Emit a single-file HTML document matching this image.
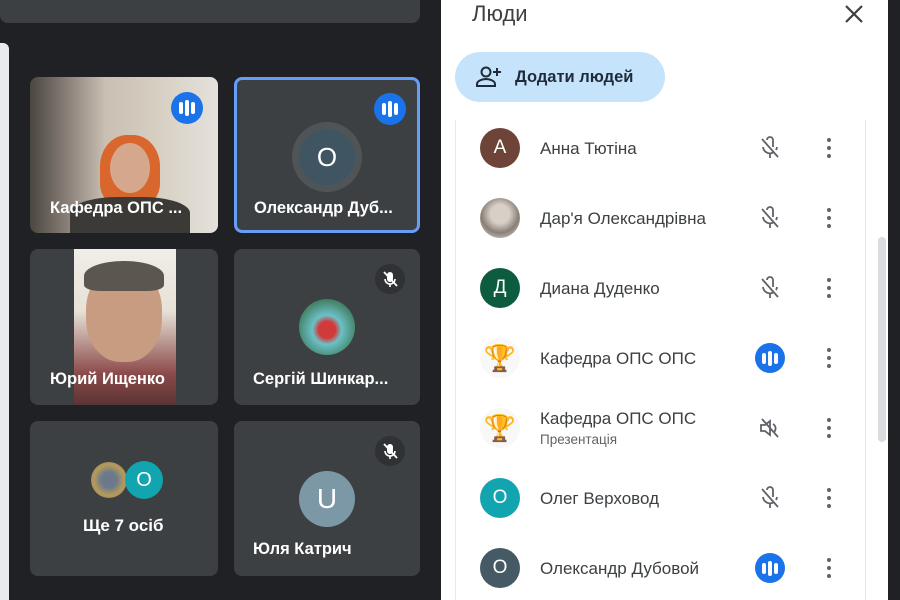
<!DOCTYPE html>
<html><head><meta charset="utf-8"><style>
*{margin:0;padding:0;box-sizing:border-box}
body{width:900px;height:600px;overflow:hidden;background:#202124;font-family:"Liberation Sans",sans-serif;position:relative}
.a{position:absolute}
.tile{position:absolute;background:#3c4043;border-radius:8px;overflow:hidden}
.nm{position:absolute;color:#fff;font-weight:bold;font-size:16.5px;white-space:nowrap}
.spk{position:absolute;width:32px;height:32px;border-radius:50%;background:#1a73e8;display:flex;align-items:center;justify-content:center;gap:2px}
.spk i{display:block;width:4px;background:#fff;border-radius:2px}
.mut{position:absolute;width:30px;height:30px;border-radius:50%;background:#2f3134}
.row{position:absolute;left:480px;width:370px;height:40px}
.av{position:absolute;left:0;top:0;width:40px;height:40px;border-radius:50%;color:#fff;font-size:19px;display:flex;align-items:center;justify-content:center}
.rn{position:absolute;left:60px;top:11px;font-size:17px;color:#3c4043;white-space:nowrap}
.dots{position:absolute;left:347px;top:10px;width:4px;height:20px}
.dots b{display:block;width:4px;height:4px;border-radius:50%;background:#5f6368;margin-bottom:4px}
.bspk{position:absolute;left:275px;top:5px;width:30px;height:30px;border-radius:50%;background:#1a73e8;display:flex;align-items:center;justify-content:center;gap:2px}
.bspk i{display:block;width:4px;height:14px;background:#fff;border-radius:2px}
.mic{position:absolute;left:278px;top:8px}
</style></head><body>
<div class="a" style="left:0;top:0;width:420px;height:23px;background:#3c4043;border-radius:0 0 8px 8px"></div>
<div class="a" style="left:0;top:43px;width:9px;height:557px;background:#e8eaed;border-radius:0 6px 0 0"></div>

<div class="tile" style="left:30px;top:77px;width:188px;height:156px;background:linear-gradient(90deg,#4a4640 0,#8a8078 20%,#c9bfb2 40%,#d8d0c4 70%,#e4e2dc 100%)">
 <div class="a" style="left:70px;top:58px;width:60px;height:70px;border-radius:45% 45% 30% 30%;background:#d9662c"></div>
 <div class="a" style="left:80px;top:66px;width:40px;height:50px;border-radius:50%;background:#d5a88e"></div>
 <div class="a" style="left:40px;top:120px;width:120px;height:40px;border-radius:40% 40% 0 0;background:#3b3a36"></div>
 <div class="nm" style="left:20px;top:122px">Кафедра ОПС ...</div>
 <div class="spk" style="left:141px;top:15px"><i style="height:12px"></i><i style="height:16px"></i><i style="height:12px"></i></div>
</div>
<div class="tile" style="left:234px;top:77px;width:186px;height:156px;border:3px solid #669df6;background:#3c4043">
 <div class="a" style="left:55px;top:42px;width:70px;height:70px;border-radius:50%;background:#4f5457;display:flex;align-items:center;justify-content:center"><div style="width:56px;height:56px;border-radius:50%;background:#3f5562;color:#fff;font-size:26px;display:flex;align-items:center;justify-content:center">O</div></div>
 <div class="nm" style="left:17px;top:119px">Олександр Дуб...</div>
 <div class="spk" style="left:137px;top:13px"><i style="height:12px"></i><i style="height:16px"></i><i style="height:12px"></i></div>
</div>
<div class="tile" style="left:30px;top:249px;width:188px;height:156px">
 <div class="a" style="left:44px;top:0;width:102px;height:156px;background:linear-gradient(180deg,#f0eee8 0,#e7e1d6 40%,#8b4a4a 80%,#5c3434 100%)"></div>
 <div class="a" style="left:56px;top:18px;width:76px;height:95px;border-radius:45%;background:#c89c80"></div>
 <div class="a" style="left:54px;top:12px;width:80px;height:30px;border-radius:50% 50% 20% 20%;background:#5c5650"></div>
 <div class="nm" style="left:20px;top:121px">Юрий Ищенко</div>
</div>
<div class="tile" style="left:234px;top:249px;width:186px;height:156px">
 <div class="a" style="left:65px;top:50px;width:56px;height:56px;border-radius:50%;background:radial-gradient(circle at 50% 55%,#d03a3a 0 20%,#6cc0c8 35%,#3f7c5a 75%)"></div>
 <div class="nm" style="left:19px;top:121px">Сергій Шинкар...</div>
 <div class="mut" style="left:141px;top:15px"><svg width="30" height="30" viewBox="0 0 30 30"><rect x="12" y="8" width="6" height="10" rx="3" fill="#fff"/><path d="M10 15a5 5 0 0 0 10 0M15 20v3" stroke="#fff" stroke-width="1.6" fill="none"/><path d="M9 8l13 14" stroke="#fff" stroke-width="1.8"/></svg></div>
</div>
<div class="tile" style="left:30px;top:421px;width:188px;height:155px">
 <div class="a" style="left:61px;top:41px;width:36px;height:36px;border-radius:50%;background:radial-gradient(circle,#6b7a8a 0 30%,#b59a5c 60%,#8a7a50)"></div>
 <div class="a" style="left:95px;top:40px;width:38px;height:38px;border-radius:50%;background:#12a4af;color:#fff;font-size:20px;display:flex;align-items:center;justify-content:center">O</div>
 <div class="nm" style="left:53px;top:95px;font-size:17px">Ще 7 осіб</div>
</div>
<div class="tile" style="left:234px;top:421px;width:186px;height:155px">
 <div class="a" style="left:65px;top:50px;width:56px;height:56px;border-radius:50%;background:#7c98a6;color:#fff;font-size:28px;display:flex;align-items:center;justify-content:center">U</div>
 <div class="nm" style="left:19px;top:119px">Юля Катрич</div>
 <div class="mut" style="left:141px;top:15px"><svg width="30" height="30" viewBox="0 0 30 30"><rect x="12" y="8" width="6" height="10" rx="3" fill="#fff"/><path d="M10 15a5 5 0 0 0 10 0M15 20v3" stroke="#fff" stroke-width="1.6" fill="none"/><path d="M9 8l13 14" stroke="#fff" stroke-width="1.8"/></svg></div>
</div>

<div class="a" style="left:441px;top:0;width:447px;height:600px;background:#fff"></div>
<div class="a" style="left:888px;top:0;width:12px;height:600px;background:#202124"></div>
<div class="a" style="left:472px;top:1px;font-size:22px;color:#3c4043">Люди</div>
<svg class="a" style="left:843px;top:3px" width="22" height="22" viewBox="0 0 22 22"><path d="M3 3l16 16M19 3L3 19" stroke="#3c4043" stroke-width="2.2"/></svg>
<div class="a" style="left:455px;top:52px;width:210px;height:50px;border-radius:25px;background:#c5e3fb"></div>
<svg class="a" style="left:475px;top:65px" width="28" height="24" viewBox="0 0 28 24"><circle cx="11" cy="7" r="4.5" stroke="#1f2a3a" stroke-width="2" fill="none"/><path d="M2 21v-2c0-3 5-5 9-5s9 2 9 5v2z" stroke="#1f2a3a" stroke-width="2" fill="none"/><path d="M22 3v8M18 7h8" stroke="#1f2a3a" stroke-width="2"/></svg>
<div class="a" style="left:515px;top:68px;font-size:16.5px;color:#1f2a3a;font-weight:bold">Додати людей</div>
<div class="a" style="left:455px;top:120px;width:411px;height:480px;border-left:1px solid #e8e8e8;border-right:1px solid #e8e8e8"></div>
<div class="a" style="left:878px;top:237px;width:8px;height:205px;border-radius:4px;background:#dadce0"></div>

<div class="row" style="top:128px"><div class="av" style="background:#6d4437">A</div><div class="rn">Анна Тютіна</div>
<svg class="mic" width="24" height="24" viewBox="0 0 24 24"><path d="M9 4a3 3 0 0 1 6 0v7M5 11a7 7 0 0 0 11 5M19 11a7 7 0 0 1-1 3M12 18v4M4 3l16 18" stroke="#5f6368" stroke-width="1.8" fill="none"/></svg><div class="dots"><b></b><b></b><b></b></div></div>
<div class="row" style="top:198px"><div class="av" style="background:radial-gradient(circle at 50% 40%,#d8d0c8 0 30%,#8a7f76 60%,#e6e6e6)"></div><div class="rn">Дар'я Олександрівна</div>
<svg class="mic" width="24" height="24" viewBox="0 0 24 24"><path d="M9 4a3 3 0 0 1 6 0v7M5 11a7 7 0 0 0 11 5M19 11a7 7 0 0 1-1 3M12 18v4M4 3l16 18" stroke="#5f6368" stroke-width="1.8" fill="none"/></svg><div class="dots"><b></b><b></b><b></b></div></div>
<div class="row" style="top:268px"><div class="av" style="background:#0d5c3f">Д</div><div class="rn">Диана Дуденко</div>
<svg class="mic" width="24" height="24" viewBox="0 0 24 24"><path d="M9 4a3 3 0 0 1 6 0v7M5 11a7 7 0 0 0 11 5M19 11a7 7 0 0 1-1 3M12 18v4M4 3l16 18" stroke="#5f6368" stroke-width="1.8" fill="none"/></svg><div class="dots"><b></b><b></b><b></b></div></div>
<div class="row" style="top:338px"><div class="av" style="background:#f8f8f8;font-size:26px;color:#d4a020">🏆</div><div class="rn">Кафедра ОПС ОПС</div>
<div class="bspk"><i style="height:11px"></i><i style="height:15px"></i><i style="height:11px"></i></div><div class="dots"><b></b><b></b><b></b></div></div>
<div class="row" style="top:408px"><div class="av" style="background:#f8f8f8;font-size:26px;color:#d4a020">🏆</div><div class="rn" style="top:1px">Кафедра ОПС ОПС</div><div class="a" style="left:60px;top:24px;font-size:13.5px;color:#5f6368">Презентація</div>
<svg class="mic" width="24" height="24" viewBox="0 0 24 24"><path d="M3 9h4l5-4v14l-5-4H3zM15 8a5 5 0 0 1 1 8M4 3l16 18" stroke="#5f6368" stroke-width="1.8" fill="none"/></svg><div class="dots"><b></b><b></b><b></b></div></div>
<div class="row" style="top:478px"><div class="av" style="background:#12a4af">O</div><div class="rn">Олег Верховод</div>
<svg class="mic" width="24" height="24" viewBox="0 0 24 24"><path d="M9 4a3 3 0 0 1 6 0v7M5 11a7 7 0 0 0 11 5M19 11a7 7 0 0 1-1 3M12 18v4M4 3l16 18" stroke="#5f6368" stroke-width="1.8" fill="none"/></svg><div class="dots"><b></b><b></b><b></b></div></div>
<div class="row" style="top:548px"><div class="av" style="background:#455a64">O</div><div class="rn">Олександр Дубовой</div>
<div class="bspk"><i style="height:11px"></i><i style="height:15px"></i><i style="height:11px"></i></div><div class="dots"><b></b><b></b><b></b></div></div>
</body></html>
